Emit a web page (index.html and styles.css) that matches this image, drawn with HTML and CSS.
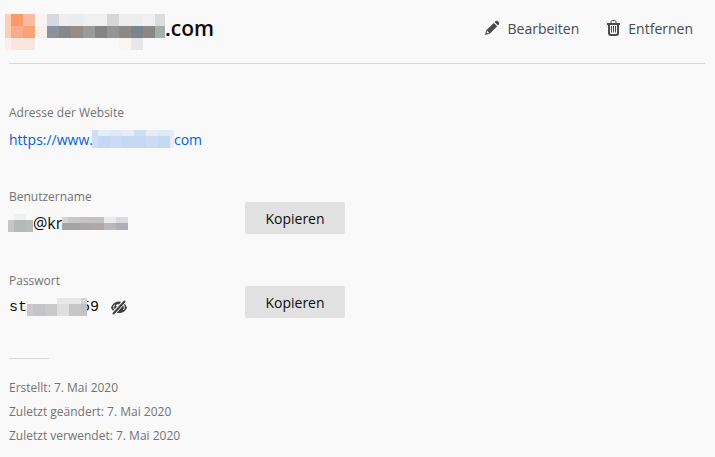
FILE: index.html
```html
<!DOCTYPE html>
<html lang="de">
<head>
    <meta charset="UTF-8">
    <meta name="viewport" content="width=device-width, initial-scale=1.0">
    <title>Zugangsdaten</title>
    <link rel="stylesheet" href="styles.css">
</head>
<body>
    <main class="login-item">
        <header class="header">
            <svg class="favicon" width="42" height="36" viewBox="0 0 42 36" shape-rendering="crispEdges" aria-hidden="true">
                <path fill="#f9cfb5" d="M0 0h6v24H0z"/>
                <path fill="#f99b68" d="M6 0h12v12H6z"/>
                <path fill="#f9b9a2" d="M18 0h12v12H18z"/>
                <path fill="#faf5f1" d="M30 0h12v12H30z"/>
                <path fill="#f9ab8b" d="M6 12h12v12H6z"/>
                <path fill="#f9a276" d="M18 12h12v12H18z"/>
                <path fill="#faf0e9" d="M30 12h12v12H30z"/>
                <path fill="#f9efec" d="M0 24h6v12H0z"/>
                <path fill="#f8e5dd" d="M6 24h24v12H6z"/>
            </svg>
            <h1 class="title">
                <svg class="mask" width="118" height="36" viewBox="0 0 118 36" shape-rendering="crispEdges" aria-hidden="true">
                    <path fill="#d6dae0" d="M0 0h12v12H0z"/>
                    <path fill="#eeeeef" d="M12 0h12v12H12z"/>
                    <path fill="#ebecee" d="M24 0h12v12H24z"/>
                    <path fill="#f0f0f1" d="M36 0h24v12H36z"/>
                    <path fill="#d6d7d9" d="M60 0h12v12H60z"/>
                    <path fill="#eeeeef" d="M72 0h12v12H72z"/>
                    <path fill="#ebedef" d="M84 0h12v12H84z"/>
                    <path fill="#f0f0f0" d="M96 0h12v12H96z"/>
                    <path fill="#dcdcdc" d="M108 0h10v12h-10z"/>
                    <path fill="#8c929d" d="M0 12h12v12H0z"/>
                    <path fill="#88888a" d="M12 12h12v12H12z"/>
                    <path fill="#958e88" d="M24 12h12v12H24z"/>
                    <path fill="#9a9a9a" d="M36 12h12v12H36z"/>
                    <path fill="#858585" d="M48 12h12v12H48z"/>
                    <path fill="#939596" d="M60 12h12v12H60z"/>
                    <path fill="#8c8986" d="M72 12h12v12H72z"/>
                    <path fill="#7b838d" d="M84 12h12v12H84z"/>
                    <path fill="#8c8885" d="M96 12h12v12H96z"/>
                    <path fill="#a7acac" d="M108 12h10v12h-10z"/>
                    <path fill="#faf5f3" d="M72 24h12v12H72z"/>
                    <path fill="#e7e8ec" d="M84 24h12v12H84z"/>
                </svg>.com
            </h1>
            <button class="action" type="button">
                <svg width="16" height="16" viewBox="1 0 16 16" aria-hidden="true">
                    <path fill="#4a4a4f" d="M1 15l1.300-4.700L9.800 2.900l3.400 3.400-7.500 7.400zM10.600 2.100l.9-.8c.7-.7 1.700-.6 2.300 0l1 1c.6.600.6 1.600 0 2.200l-.8.900z"/>
                    <path fill="#f9f9fa" d="M3 10.800l2.200 2.300-1.400.5-1.300-1.300z"/>
                </svg>
                Bearbeiten
            </button>
            <button class="action" type="button">
                <svg width="14" height="16" viewBox="0 0 14 16" aria-hidden="true">
                    <path fill="none" stroke="#4a4a4f" stroke-width="2" d="M0 4h13M2 4v9c0 1.200.8 2 2 2h5c1.200 0 2-.8 2-2V4"/>
                    <path fill="none" stroke="#4a4a4f" d="M4 3V2C4 1.200 4.500.5 5.500.5h2C8.500.5 9 1.200 9 2v1M4.500 6v6.500M6.500 6v6.500M8.500 6v6.500"/>
                </svg>
                Entfernen
            </button>
        </header>

        <section class="field">
            <span class="label">Adresse der Website</span>
            <a class="value link" href="#">https://www.<svg class="mask cover-left" width="82" height="18" viewBox="0 0 82 18" shape-rendering="crispEdges" aria-hidden="true">
                    <path fill="#d0def4" d="M0 0h6v18H0z"/>
                    <path fill="#e6edf8" d="M6 0h76v6H6z"/>
                    <path fill="#dee8f7" d="M18 0h12v6H18zM66 0h12v6H66z"/>
                    <path fill="#d0dff3" d="M42 0h12v6H42z"/>
                    <path fill="#c5d8f3" d="M6 6h72v12H6z"/>
                    <path fill="#cbdbf4" d="M18 6h12v12H18zM54 6h12v12H54z"/>
                    <path fill="#e6edf8" d="M78 6h4v12h-4z"/>
                </svg>com</a>
        </section>

        <section class="field">
            <span class="label">Benutzername</span>
            <span class="value username">
                <svg class="mask cover-left" width="25" height="18" viewBox="0 0 25 18" shape-rendering="crispEdges" aria-hidden="true">
                    <path fill="#eff1f0" d="M6 0h12v6H6z"/>
                    <path fill="#c6c6c6" d="M0 6h6v12H0z"/>
                    <path fill="#b5b9b7" d="M6 6h12v12H6z"/>
                    <path fill="#bababa" d="M18 6h7v12h-7z"/>
                </svg>@kr<svg class="mask" width="66" height="13" viewBox="0 0 66 13" shape-rendering="crispEdges" aria-hidden="true">
                    <path fill="#d5d4d5" d="M0 0h6v6H0z"/>
                    <path fill="#cac7c9" d="M6 0h12v6H6z"/>
                    <path fill="#c5c1c3" d="M18 0h24v6H18z"/>
                    <path fill="#ebebeb" d="M42 0h12v6H42z"/>
                    <path fill="#d9dbe1" d="M54 0h12v6H54z"/>
                    <path fill="#a7a4a4" d="M0 6h18v7H0z"/>
                    <path fill="#a9a7aa" d="M18 6h12v7H18z"/>
                    <path fill="#b1a7a6" d="M30 6h12v7H30z"/>
                    <path fill="#b6b8ba" d="M42 6h12v7H42z"/>
                    <path fill="#abafba" d="M54 6h12v7H54z"/>
                </svg>
            </span>
            <button class="copy" type="button">Kopieren</button>
        </section>

        <section class="field">
            <span class="label">Passwort</span>
            <span class="value password">
                st<svg class="mask cover-right" width="60" height="18" viewBox="0 0 60 18" shape-rendering="crispEdges" aria-hidden="true">
                    <path fill="#f9f9fa" d="M30 0h30v18H30z"/>
                    <path fill="#c9c9c9" d="M0 6h30v12H0z"/>
                    <path fill="#c4c4c6" d="M6 6h12v12H6z"/>
                    <path fill="#e6e8e9" d="M30 0h24v6H30z"/>
                    <path fill="#d4d4d5" d="M54 0h6v6h-6z"/>
                    <path fill="#dddfe1" d="M30 6h12v12H30z"/>
                    <path fill="#c8c6c5" d="M42 6h12v12H42z"/>
                    <path fill="#c3c3c4" d="M54 6h6v12h-6z"/>
                </svg>59
                <button class="reveal" type="button" aria-label="Passwort anzeigen">
                    <svg width="16" height="16" viewBox="0 0 16 16" aria-hidden="true">
                        <path fill="#3d3d3f" d="M0 8.500C1.600 4.500 4.400 2.500 8 2.500s6.400 2 8 6C14.400 12.500 11.600 14 8 14S1.600 12.500 0 8.500z"/>
                        <path fill="none" stroke="#f9f9fa" d="M3.600 5.800C2.400 7.200 2.400 9.600 3.600 11M12.400 5.800c1.200 1.400 1.200 3.800 0 5.200"/>
                        <circle cx="6.500" cy="6.500" r="1.300" fill="#f9f9fa"/>
                        <path stroke="#f9f9fa" stroke-width="4" d="M2 15L14 1.500"/>
                        <path stroke="#3d3d3f" stroke-width="2" stroke-linecap="round" d="M2.500 14.500l11-12"/>
                    </svg>
                </button>
            </span>
            <button class="copy" type="button">Kopieren</button>
        </section>

        <hr class="divider">

        <footer class="meta">
            <p>Erstellt: 7. Mai 2020</p>
            <p>Zuletzt geändert: 7. Mai 2020</p>
            <p>Zuletzt verwendet: 7. Mai 2020</p>
        </footer>
    </main>
</body>
</html>
```
FILE: styles.css
```css
* {
    margin: 0;
    padding: 0;
    box-sizing: border-box;
}

body {
    font-family: 'Segoe UI', 'Open Sans', 'Noto Sans', sans-serif;
    font-size: 14px;
    background: #f9f9fa;
    color: #0c0c0d;
}

button {
    border: none;
    font: inherit;
    cursor: pointer;
}

.login-item {
    padding: 0 10px 0 9px;
}

.header {
    display: flex;
    align-items: center;
    gap: 4px;
    height: 64px;
    margin-bottom: 39px;
    border-bottom: 1px solid #d7d7db;
}

.favicon {
    margin: 0 -4px;
}

.title {
    display: flex;
    flex: 1;
    font-size: 21px;
    font-weight: 600;
    line-height: 28px;
}

.mask {
    flex: none;
}

.action {
    display: flex;
    align-items: center;
    gap: 7px;
    padding: 0 12px;
    margin-bottom: 7px;
    background: transparent;
    color: #4a4a4f;
}

.field {
    display: grid;
    grid-template-columns: 236px 100px;
    grid-template-rows: 20px 32px;
    margin-bottom: 32px;
}

.label {
    font-size: 12px;
    line-height: 20px;
    color: #737373;
}

.value {
    grid-row: 2;
    display: flex;
    align-items: center;
}

.link {
    color: #0060df;
    text-decoration: none;
}

.username {
    font-size: 16px;
}

.password {
    font-family: 'Liberation Mono', monospace;
    font-size: 15px;
}

.cover-left {
    margin-left: -1px;
}

.cover-right {
    position: relative;
    margin-right: -6px;
}

.reveal {
    display: flex;
    margin-left: 12px;
    background: transparent;
}

.copy {
    grid-column: 2;
    grid-row: 1 / 3;
    height: 32px;
    margin-top: 15px;
    border-radius: 2px;
    background: #e1e1e2;
    color: #0c0c0d;
}

.divider {
    width: 40px;
    border: none;
    border-top: 1px solid #d7d7db;
    margin: 35px 0 17px;
}

.meta {
    font-size: 12px;
    line-height: 24px;
    color: #737373;
}
```
